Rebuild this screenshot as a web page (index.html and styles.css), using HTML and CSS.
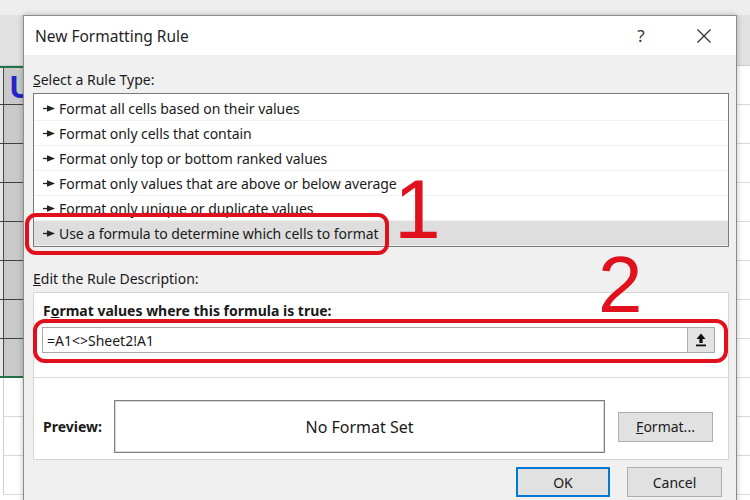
FILE: index.html
```html
<!DOCTYPE html>
<html>
<head>
<meta charset="utf-8">
<link rel="stylesheet" href="styles.css">
</head>
<body>
<div class="sheet">
  <div class="strip"></div>
  <div class="row hdr"><div class="c1"></div><div class="c2"></div></div>
  <div class="row in first"><div class="c1"><span class="ucol">U</span></div><div class="c2"></div></div>
  <div class="row in"><div class="c1"></div><div class="c2"></div></div>
  <div class="row in"><div class="c1"></div><div class="c2"></div></div>
  <div class="row in"><div class="c1"></div><div class="c2"></div></div>
  <div class="row in"><div class="c1"></div><div class="c2"></div></div>
  <div class="row in"><div class="c1"></div><div class="c2"></div></div>
  <div class="row in"><div class="c1"></div><div class="c2"></div></div>
  <div class="row in last"><div class="c1"></div><div class="c2"></div></div>
  <div class="row out"><div class="c1"></div><div class="c2"></div></div>
  <div class="row out"><div class="c1"></div><div class="c2"></div></div>
  <div class="row out"><div class="c1"></div><div class="c2"></div></div>
</div>

<div class="dialog">
  <div class="titlebar">
    <span class="title">New Formatting Rule</span>
    <span class="help">?</span>
    <span class="close"><svg width="14" height="14" viewBox="0 0 14 14"><path d="M0.5 0.5L13.5 13.5M13.5 0.5L0.5 13.5" stroke="#333" stroke-width="1.3" fill="none"/></svg></span>
  </div>
  <div class="body">
    <div class="label"><u>S</u>elect a Rule Type:</div>
    <ul class="list">
      <li><svg class="arr" width="12" height="7" viewBox="0 0 12 7"><path d="M0 3.5H6" stroke="#222" stroke-width="1.3"/><path d="M4 0.3L12 3.5L4 6.7Z" fill="#222"/></svg>Format all cells based on their values</li>
      <li><svg class="arr" width="12" height="7" viewBox="0 0 12 7"><path d="M0 3.5H6" stroke="#222" stroke-width="1.3"/><path d="M4 0.3L12 3.5L4 6.7Z" fill="#222"/></svg>Format only cells that contain</li>
      <li><svg class="arr" width="12" height="7" viewBox="0 0 12 7"><path d="M0 3.5H6" stroke="#222" stroke-width="1.3"/><path d="M4 0.3L12 3.5L4 6.7Z" fill="#222"/></svg>Format only top or bottom ranked values</li>
      <li><svg class="arr" width="12" height="7" viewBox="0 0 12 7"><path d="M0 3.5H6" stroke="#222" stroke-width="1.3"/><path d="M4 0.3L12 3.5L4 6.7Z" fill="#222"/></svg>Format only values that are above or below average</li>
      <li><svg class="arr" width="12" height="7" viewBox="0 0 12 7"><path d="M0 3.5H6" stroke="#222" stroke-width="1.3"/><path d="M4 0.3L12 3.5L4 6.7Z" fill="#222"/></svg>Format only unique or duplicate values</li>
      <li class="sel"><svg class="arr" width="12" height="7" viewBox="0 0 12 7"><path d="M0 3.5H6" stroke="#222" stroke-width="1.3"/><path d="M4 0.3L12 3.5L4 6.7Z" fill="#222"/></svg>Use a formula to determine which cells to format</li>
    </ul>
    <div class="label edit"><u>E</u>dit the Rule Description:</div>
    <div class="group">
      <div class="glabel">F<u>o</u>rmat values where this formula is true:</div>
      <div class="input">
        <span class="val">=A1&lt;&gt;Sheet2!A1</span>
        <span class="ref"><svg width="10" height="14" viewBox="0 0 10 14"><path d="M5 0.5L9.5 6H6.6V10H3.4V6H0.5Z" fill="#111"/><rect x="0" y="11.5" width="10" height="1.8" fill="#111"/></svg></span>
      </div>
      <div class="sep"></div>
      <div class="prow">
        <span class="plabel">Preview:</span>
        <div class="preview">No Format Set</div>
        <span class="btn fmt"><u>F</u>ormat...</span>
      </div>
    </div>
    <div class="actions">
      <span class="btn ok">OK</span>
      <span class="btn cancel">Cancel</span>
    </div>
  </div>
</div>

<div class="mark m1"></div>
<div class="mark m2"></div>
<div class="num n1">1</div>
<div class="num n2">2</div>
</body>
</html>
```

FILE: styles.css
```css
body {
  margin: 0;
  width: 750px;
  height: 500px;
  overflow: hidden;
  position: relative;
  background: #fff;
  font-family: "Noto Sans", "Open Sans", sans-serif;
  color: #1a1a1a;
}

/* background spreadsheet */
.sheet {
  display: flex;
  flex-direction: column;
  height: 500px;
}
.strip {
  height: 15px;
  background: #eeeeee;
  flex: none;
}
.row {
  display: flex;
  height: 39px;
  flex: none;
  box-sizing: border-box;
}
.row .c1 {
  width: 23px;
  box-sizing: border-box;
  flex: none;
}
.row .c2 {
  flex: 1;
  box-sizing: border-box;
}
.row.hdr {
  height: 51px;
}
.row.hdr .c1,
.row.hdr .c2 {
  background: #e2e2e2;
  border-bottom: 1px solid #c9c9c9;
}
.row.in .c1 {
  background: linear-gradient(to right, #e6e6e6 0 3px, #4a4a4a 3px 4px, #c9c9c9 4px);
  border-bottom: 1px solid #3f3f3f;
  display: flex;
  align-items: center;
  overflow: visible;
}
.row.in.first .c1 {
  border-top: 2px solid #217346;
}
.row.in.last .c1 {
  border-bottom: 2px solid #217346;
}
.row .c2 {
  border-bottom: 1px solid #d9d9d9;
  background: #fff;
}
.row.out .c1 {
  border-bottom: 1px solid #d9d9d9;
  border-left: 1px solid #d0d0d0;
  margin-left: 3px;
  width: 20px;
}
.ucol {
  font-size: 31px;
  font-weight: bold;
  color: #2424c8;
  padding-left: 9px;
  line-height: 1;
}

/* dialog window */
.dialog {
  position: absolute;
  left: 23px;
  top: 15px;
  width: 714px;
  height: 500px;
  box-sizing: border-box;
  border: 1px solid #8c8c8c;
  background: #f0f0f0;
  box-shadow: 0 0 6px rgba(0, 0, 0, 0.25);
  display: flex;
  flex-direction: column;
}
.titlebar {
  height: 39px;
  flex: none;
  background: #fff;
  display: flex;
  align-items: center;
}
.title {
  flex: 1;
  padding-left: 11px;
  font-size: 15.5px;
  color: #1f1f1f;
}
.help {
  width: 46px;
  margin-right: 17px;
  text-align: center;
  font-size: 17px;
  color: #333;
}
.close {
  width: 46px;
  margin-right: 9px;
  display: flex;
  justify-content: center;
}
.body {
  flex: 1;
  padding: 15px 7px 0 9px;
}
.label {
  font-size: 14px;
  line-height: 20px;
}
.edit {
  margin-top: 22px;
}
.list {
  list-style: none;
  margin: 3px 0 0;
  padding: 2px 0 0;
  height: 154px;
  box-sizing: border-box;
  background: #fff;
  border: 1px solid #7a7a7a;
}
.list li {
  height: 25px;
  box-sizing: border-box;
  border-bottom: 1px solid #f1f1f1;
  display: flex;
  align-items: center;
  padding-left: 9px;
  font-size: 14px;
  letter-spacing: -0.05px;
}
.list li.sel {
  background: #dedede;
}
.arr {
  margin-right: 4px;
  flex: none;
}

.group {
  margin-top: 3px;
  height: 168px;
  box-sizing: border-box;
  background: #fff;
  border: 1px solid #d5d5d5;
}
.glabel {
  font-weight: bold;
  font-size: 14px;
  line-height: 20px;
  padding: 8px 0 0 9px;
}
.input {
  margin: 6px 13px 0 8px;
  height: 26px;
  box-sizing: border-box;
  border: 1px solid #a8a8a8;
  display: flex;
  align-items: stretch;
}
.val {
  flex: 1;
  padding-left: 4px;
  font-size: 14px;
  display: flex;
  align-items: center;
}
.ref {
  width: 26px;
  background: #e3e3e3;
  border-left: 1px solid #adadad;
  display: flex;
  align-items: center;
  justify-content: center;
}
.sep {
  margin-top: 24px;
  height: 1px;
  background: #dcdcdc;
}
.prow {
  display: flex;
  align-items: center;
  padding: 22px 0 0 9px;
}
.plabel {
  width: 71px;
  font-weight: bold;
  font-size: 14px;
}
.preview {
  width: 491px;
  height: 53px;
  box-sizing: border-box;
  border: 1px solid #7e7e7e;
  box-shadow: inset 0 0 0 1px #dadada;
  display: flex;
  align-items: center;
  justify-content: center;
  font-size: 16px;
}
.btn {
  display: flex;
  align-items: center;
  justify-content: center;
  box-sizing: border-box;
  background: #e1e1e1;
  border: 1px solid #adadad;
  font-size: 14px;
  height: 30px;
}
.fmt {
  margin-left: 13px;
  width: 95px;
}
.actions {
  display: flex;
  justify-content: flex-end;
  gap: 17px;
  margin-top: 7px;
  padding-right: 7px;
}
.ok {
  width: 94px;
  border: 2px solid #0078d7;
}
.cancel {
  width: 95px;
}

/* annotations */
.mark {
  position: absolute;
  border: 4px solid #e0101c;
  box-sizing: border-box;
}
.m1 {
  left: 25px;
  top: 213px;
  width: 364px;
  height: 42px;
  border-radius: 11px;
}
.m2 {
  left: 33px;
  top: 319px;
  width: 695px;
  height: 44px;
  border-radius: 12px;
}
.num {
  position: absolute;
  font-family: "Liberation Sans", Arial, sans-serif;
  color: #e0101c;
  line-height: 1;
}
.n1 {
  left: 394px;
  top: 167px;
  font-size: 84px;
}
.n2 {
  left: 598px;
  top: 245px;
  font-size: 80px;
}
```
